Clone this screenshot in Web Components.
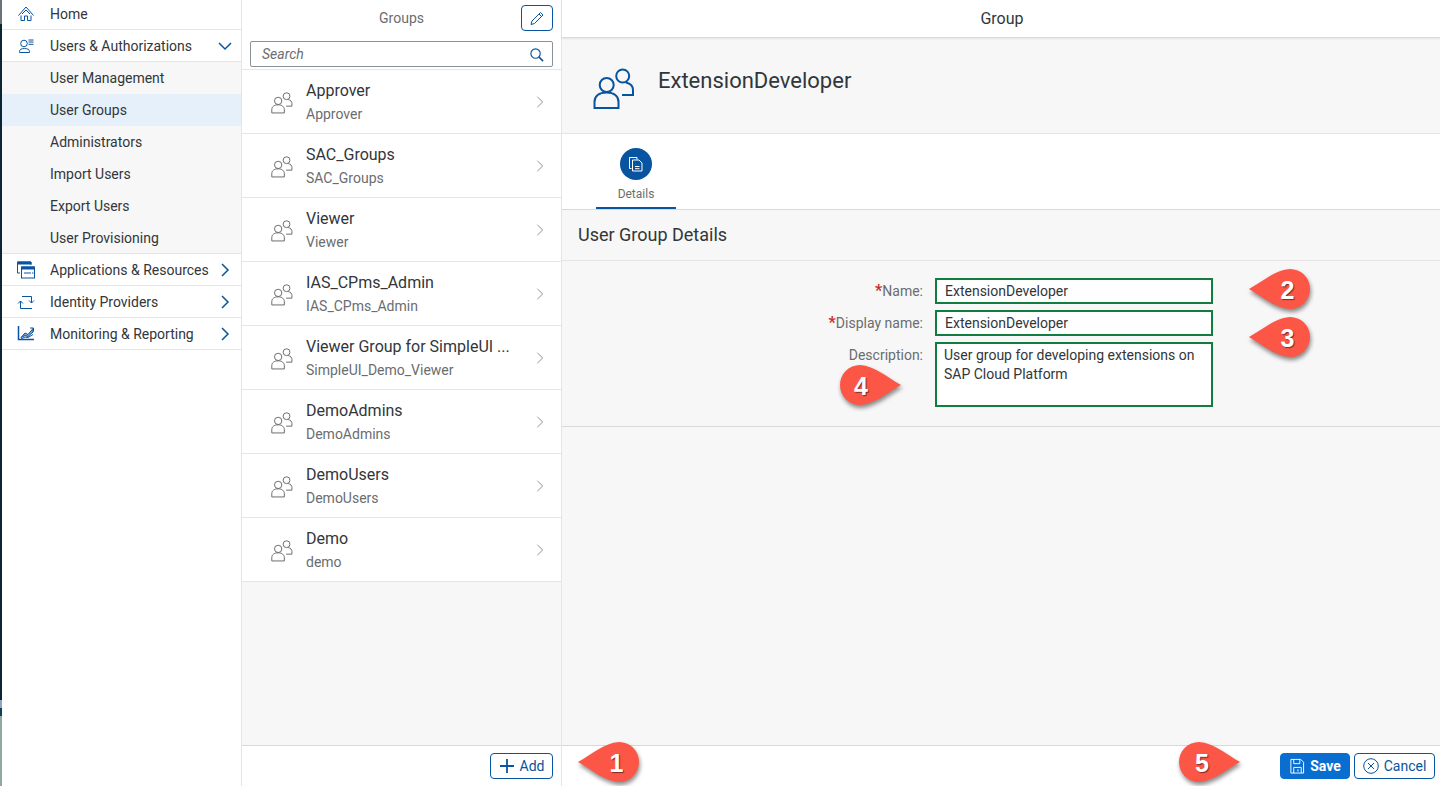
<!DOCTYPE html>
<html>
<head>
<meta charset="utf-8">
<title>Groups</title>
<style>
html,body{margin:0;height:100%;overflow:hidden;background:#fff;}
body{font-family:Roboto,"Liberation Sans",sans-serif;color:#32363a;}
</style>
</head>
<body>
<admin-shell>
  <side-nav slot="nav"></side-nav>
  <group-list slot="list"></group-list>
  <group-detail slot="detail"></group-detail>
</admin-shell>
<call-out num="1" dir="left" style="left:578px;top:742px"></call-out>
<call-out num="2" dir="left" style="left:1249px;top:269px"></call-out>
<call-out num="3" dir="left" style="left:1249px;top:317px"></call-out>
<call-out num="4" dir="right" dx="1" style="left:839px;top:365px"></call-out>
<call-out num="5" dir="right" dx="3" style="left:1178px;top:742px"></call-out>
<script>
const BLUE='#0a6ed1', DARK='#0854a0';
const ICONS={
 home:'<path d="M1.500 10.500 9 2l7.500 8.500M5 9l4-4 4 4M4 10.500V15.500h3.500V11h3v4.500H14V10.500"/>',
 users:'<circle cx="7" cy="6.500" r="3.300"/><path d="M2.500 15.500V14.500c0-2 2-3 5-3s5 1 5 3v1zM11.500 3h5M11.500 5h5M11.500 7.300h5"/>',
 apps:'<path d="M14 4V1H.5v11H3"/><path d="M.5 1H14v2H.5z" fill="#0854a0"/><rect x="4.500" y="6" width="13" height="11"/><path d="M4.500 6h13v2h-13z" fill="#0854a0"/><path d="M7 12h7M15 12h1.500"/>',
 idp:'<path d="M5 3.500h9.500V10M12 7.500l2.500 2.500L17 7.500M3.500 8v7.500H15M1 10.500 3.500 8 6 10.500"/>',
 chart:'<path d="M1.500 1v13.500H17" stroke-width="1.500"/><path d="M4 12.500 8 8l3 1.500 5-6V7l-5 4.500L8 10.500z" fill="#0854a0" fill-opacity=".5"/><path d="M4 14l4-2 3 .5 5-3M13 3h3.500v3.500"/>',
 group:'<circle cx="13.700" cy="17" r="7"/><path d="M1.500 40v-6C1.500 28 6 24.500 13.500 24.500S25.500 28 25.500 34v6z"/><circle cx="29.700" cy="8" r="6.500"/><path d="M33 14.500c4.500 1 7 4 7 7.500v5H29"/>',
 pencil:'<path d="M2 14.500 3 11 11.500 2.500 14 5 5.500 13.500zM10 4l2.500 2.500"/>',
 search:'<circle cx="7" cy="7" r="5"/><path d="M10.500 10.500 15 15" stroke-width="1.700"/>',
 doc:'<path d="M3.500 12.500h-2v-11H9v2M4.500 4H11l3 3v8H4.500zM7 10.500h4.500M7 12.700h4.500"/>',
 save:'<path d="M2 1.500h10.500l3 3V16H2zM5 1.500v4.500h6.500V1.500M5 16v-6h8v6M9.500 12v2.500"/>',
 cancel:'<circle cx="8" cy="8" r="7.300"/><path d="M5 5l6 6M11 5l-6 6"/>',
 plus:'<path d="M8 1v14M1 8h14"/>',
 down:'<path d="M2 5l6 6 6-6"/>',
 right:'<path d="M5 2l6 6-6 6"/>'
};
const icon=(name,size,color,sw=1,box=18)=>`<svg width="${size}" height="${size}" viewBox="0 0 ${box} ${box}" fill="none" stroke="${color}" stroke-width="${sw}" aria-hidden="true">${ICONS[name]}</svg>`;

class AdminShell extends HTMLElement{
 constructor(){
  super();
  this.attachShadow({mode:'open'}).innerHTML=`<style>
  :host{display:flex;width:1440px;height:786px;background:#fff;}
  .strip{width:2px;flex:none;background:linear-gradient(#6b7378 0 24px,#0c2533 24px 700px,#8fa3c4 700px 708px,#123d52 708px 716px,#8fa8a0 716px);}
  </style>
  <div class="strip"></div>
  <slot name="nav"></slot><slot name="list"></slot><slot name="detail"></slot>`;
 }
}
class SideNav extends HTMLElement{
 constructor(){
  super();
  const top=[['home','Home'],['users','Users & Authorizations','down']];
  const sub=['User Management','User Groups','Administrators','Import Users','Export Users','User Provisioning'];
  const rest=[['apps','Applications & Resources'],['idp','Identity Providers'],['chart','Monitoring & Reporting']];
  const row=([ic,t,ch])=>`<div class="row"><span class="ic">${icon(ic,18,DARK)}</span><span class="t">${t.replace('&','&amp;')}</span>${ch||ic!='home'?`<span class="ch">${icon(ch||'right',16,DARK,1.500,16)}</span>`:''}</div>`;
  this.attachShadow({mode:'open'}).innerHTML=`<style>
  :host{display:block;width:239px;height:786px;flex:none;border-right:1px solid #e5e5e5;font-size:14px;}
  .nav{margin-top:-2px;}
  .row{height:31px;border-bottom:1px solid #e5e5e5;display:flex;align-items:center;}
  .ic{width:48px;display:flex;justify-content:center;}
  .t{flex:1;white-space:nowrap;}
  .ch{width:16px;margin-right:8px;display:flex;}
  .sub{background:#f7f7f7;}
  .sub div{height:32px;line-height:32px;padding-left:48px;box-sizing:border-box;}
  .sub div:last-child{border-bottom:1px solid #e5e5e5;}
  .sub .sel{background:#e5f0fa;}
  </style>
  <div class="nav">${top.map(row).join('')}
  <div class="sub">${sub.map(s=>`<div class="${s=='User Groups'?'sel':''}">${s}</div>`).join('')}</div>
  ${rest.map(row).join('')}</div>`;
 }
}
class ListItem extends HTMLElement{
 constructor(){
  super();
  this.attachShadow({mode:'open'}).innerHTML=`<style>
  :host{display:flex;align-items:center;height:63px;border-bottom:1px solid #e5e5e5;background:#fff;}
  .ic{width:64px;padding:3px 0 0 29px;box-sizing:border-box;display:flex;flex:none;}
  .tx{flex:1;min-width:0;}
  .a{font-size:16px;line-height:20px;white-space:nowrap;padding-top:1px;}
  .b{font-size:14px;line-height:18px;margin-top:4px;color:#6a6d70;}
  .ch{width:14px;margin-right:14px;display:flex;}
  </style>
  <div class="ic">${icon('group',22,'#6a6d70',1.900,42)}</div>
  <div class="tx"><div class="a">${this.getAttribute('name')}</div><div class="b">${this.getAttribute('sub')}</div></div>
  <div class="ch">${icon('right',14,'#8c8f92',1.100,16)}</div>`;
 }
}
class GroupList extends HTMLElement{
 constructor(){
  super();
  const items=[['Approver','Approver'],['SAC_Groups','SAC_Groups'],['Viewer','Viewer'],['IAS_CPms_Admin','IAS_CPms_Admin'],['Viewer Group for SimpleUI ...','SimpleUI_Demo_Viewer'],['DemoAdmins','DemoAdmins'],['DemoUsers','DemoUsers'],['Demo','demo']];
  this.attachShadow({mode:'open'}).innerHTML=`<style>
  :host{display:flex;flex-direction:column;width:319px;height:786px;flex:none;border-right:1px solid #e5e5e5;background:#f7f7f7;}
  .head{background:#fff;height:70px;box-sizing:border-box;padding:5px 8px 0;border-bottom:1px solid #e5e5e5;}
  .top{height:26px;display:flex;justify-content:center;align-items:center;position:relative;font-size:14px;color:#6a6d70;margin-bottom:10px;}
  .edit{position:absolute;right:0;top:0;width:32px;height:26px;box-sizing:border-box;border:1px solid ${DARK};border-radius:4px;display:flex;align-items:center;justify-content:center;}
  .search{height:26px;box-sizing:border-box;border:1px solid #89919a;border-radius:2px;display:flex;align-items:center;justify-content:space-between;padding:0 8px 0 11px;font-size:14px;font-style:italic;color:#6a6d70;}
  .list{flex:1;}
  .foot{height:40px;background:#fff;border-top:1px solid #d9d9d9;display:flex;align-items:center;justify-content:flex-end;padding-right:8px;}
  .btn{width:63px;height:26px;box-sizing:border-box;border:1px solid ${DARK};border-radius:4px;display:flex;align-items:center;justify-content:center;gap:5px;font-size:14px;color:${DARK};}
  </style>
  <div class="head">
   <div class="top">Groups<span class="edit">${icon('pencil',16,DARK,1,16)}</span></div>
   <div class="search">Search${icon('search',15,DARK,1.200,16)}</div>
  </div>
  <div class="list">${items.map(i=>`<list-item name="${i[0]}" sub="${i[1]}"></list-item>`).join('')}</div>
  <div class="foot"><span class="btn">${icon('plus',16,DARK,1.800,16)}Add</span></div>`;
 }
}
class GroupDetail extends HTMLElement{
 constructor(){
  super();
  const field=(label,req,val,cls='')=>`<div class="lab">${req?'<b>*</b>':''}${label}:</div><div class="inp ${cls}">${val}</div>`;
  this.attachShadow({mode:'open'}).innerHTML=`<style>
  :host{display:flex;flex-direction:column;flex:1;height:786px;background:#f7f7f7;min-width:0;}
  .bar{height:37px;background:#fff;border-bottom:1px solid #d9d9d9;box-shadow:0 1px 2px rgba(0,0,0,.08);display:flex;align-items:center;justify-content:center;font-size:16px;padding-left:2px;}
  .obj{height:96px;box-sizing:border-box;border-bottom:1px solid #e5e5e5;display:flex;gap:23px;padding:30px 0 0 31px;}
  .obj span{font-size:22px;line-height:28px;margin-top:-1px;}
  .tabs{height:76px;box-sizing:border-box;background:#fff;border-bottom:1px solid #d9d9d9;padding:0 0 0 34px;}
  .tab{width:80px;height:75px;box-sizing:border-box;border-bottom:2px solid ${DARK};display:flex;flex-direction:column;align-items:center;padding-top:14px;margin-bottom:-1px;font-size:12px;color:#6a6d70;}
  .circle{width:32px;height:32px;border-radius:50%;background:${DARK};display:flex;align-items:center;justify-content:center;margin-bottom:7px;}
  .sec{height:51px;box-sizing:border-box;padding-left:16px;font-size:18px;line-height:50px;border-bottom:1px solid #e5e5e5;}
  .form{height:166px;box-sizing:border-box;border-bottom:1px solid #d9d9d9;padding-top:17px;display:grid;grid-template-columns:361px 278px;grid-auto-rows:min-content;column-gap:12px;row-gap:6px;}
  .lab{font-size:14px;line-height:26px;color:#6a6d70;text-align:right;}
  .lab b{color:#c9302c;font-size:16px;}
  .inp{height:26px;box-sizing:border-box;border:2px solid #107e3e;background:#fff;font-size:14px;line-height:22px;padding-left:8px;}
  .area{height:65px;line-height:19px;padding:2px 0 0 7px;}
  .spacer{flex:1;}
  .foot{height:40px;background:#fff;border-top:1px solid #d9d9d9;display:flex;align-items:center;justify-content:flex-end;gap:4px;padding-right:5px;}
  .btn{height:26px;box-sizing:border-box;border:1px solid ${DARK};border-radius:4px;display:flex;align-items:center;justify-content:center;gap:5px;font-size:14px;color:${DARK};}
  .save{width:70px;background:${BLUE};border-color:${BLUE};color:#fff;font-weight:700;}
  .cancel{width:81px;}
  </style>
  <div class="bar">Group</div>
  <div class="obj">${icon('group',42,DARK,2,42)}<span>ExtensionDeveloper</span></div>
  <div class="tabs"><div class="tab"><span class="circle">${icon('doc',16,'#fff',1,16)}</span>Details</div></div>
  <div class="sec">User Group Details</div>
  <div class="form">
   ${field('Name',1,'ExtensionDeveloper')}
   ${field('Display name',1,'ExtensionDeveloper')}
   ${field('Description',0,'User group for developing extensions on SAP Cloud Platform','area')}
  </div>
  <div class="spacer"></div>
  <div class="foot"><span class="btn save">${icon('save',16,'#fff',1,17)}Save</span><span class="btn cancel">${icon('cancel',16,DARK,1,16)}Cancel</span></div>`;
 }
}
class CallOut extends HTMLElement{
 constructor(){
  super();
  const n=this.getAttribute('num'), left=this.getAttribute('dir')=='left', dx=+this.getAttribute('dx')||0;
  const d=left?'M0 20C14 12 26 1 41 0a20 20 0 0 1 0 40C26 39 14 28 0 20Z':'M62 20C48 12 36 1 21 0a20 20 0 0 0 0 40C36 39 48 28 62 20Z';
  this.attachShadow({mode:'open'}).innerHTML=`<style>
  :host{position:absolute;display:block;width:62px;height:40px;}
  svg{display:block;overflow:visible;filter:drop-shadow(1px 3px 2px rgba(0,0,0,.45));}
  span{position:absolute;top:1px;left:${(left?28:0)+dx}px;width:${left?'21px':'42px'};text-align:center;font:700 25px/40px "Liberation Sans",sans-serif;color:#fff;text-shadow:1px 1px 1px rgba(0,0,0,.5);}
  </style>
  <svg width="62" height="40" viewBox="0 0 62 40"><path d="${d}" fill="#fc5647"/></svg><span>${n}</span>`;
 }
}
customElements.define('list-item',ListItem);
customElements.define('side-nav',SideNav);
customElements.define('group-list',GroupList);
customElements.define('group-detail',GroupDetail);
customElements.define('admin-shell',AdminShell);
customElements.define('call-out',CallOut);
</script>
</body>
</html>
